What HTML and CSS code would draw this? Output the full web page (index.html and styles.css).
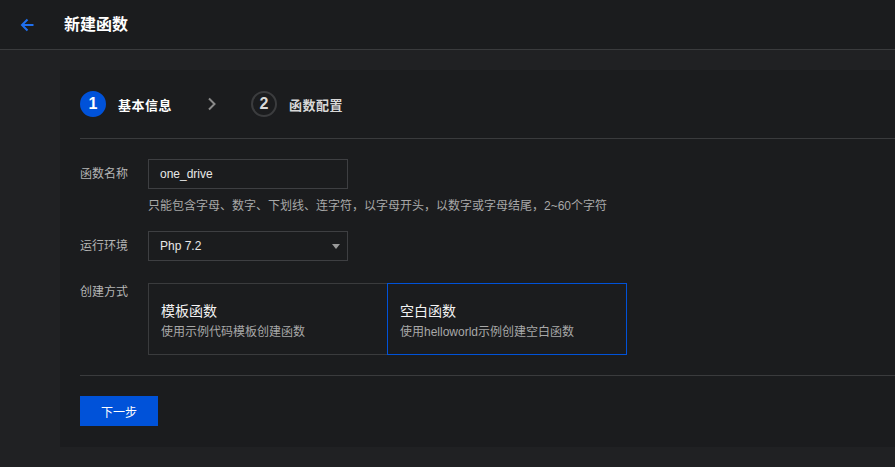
FILE: index.html
```html
<!DOCTYPE html>
<html lang="zh-CN">
<head>
<meta charset="utf-8">
<title>新建函数</title>
<link rel="stylesheet" href="styles.css">
</head>
<body>
<header class="topbar">
  <a class="back" href="#" aria-label="返回">
    <svg width="16" height="16" viewBox="0 0 16 16"><path d="M14.5 8H3M8.5 2.5L3 8l5.5 5.5" fill="none" stroke="#1f6fef" stroke-width="2"/></svg>
  </a>
  <h1 class="title">新建函数</h1>
</header>
<main class="content">
  <section class="panel">
    <div class="steps">
      <div class="step active"><span class="num">1</span><span class="label">基本信息</span></div>
      <svg class="chev" width="10" height="14" viewBox="0 0 10 14"><path d="M2 1.5L7.5 7 2 12.5" fill="none" stroke="#8a8a8a" stroke-width="2"/></svg>
      <div class="step"><span class="num">2</span><span class="label">函数配置</span></div>
    </div>
    <div class="form">
      <div class="row">
        <label class="lbl">函数名称</label>
        <div class="ctrl">
          <div class="input">one_drive</div>
          <p class="help">只能包含字母、数字、下划线、连字符，以字母开头，以数字或字母结尾，2~60个字符</p>
        </div>
      </div>
      <div class="row">
        <label class="lbl">运行环境</label>
        <div class="ctrl">
          <div class="input select">Php 7.2<span class="caret"></span></div>
        </div>
      </div>
      <div class="row top">
        <label class="lbl lbl-top">创建方式</label>
        <div class="ctrl cards">
          <div class="card">
            <div class="card-title">模板函数</div>
            <div class="card-desc">使用示例代码模板创建函数</div>
          </div>
          <div class="card selected">
            <div class="card-title">空白函数</div>
            <div class="card-desc">使用helloworld示例创建空白函数</div>
          </div>
        </div>
      </div>
    </div>
    <div class="footer">
      <button class="btn">下一步</button>
    </div>
  </section>
</main>
</body>
</html>
```
FILE: styles.css
```css
* { box-sizing: border-box; }
html, body { margin: 0; padding: 0; }
body {
  background: #202123;
  font-family: "Liberation Sans", "Noto Sans CJK SC", sans-serif;
  color: #e6e6e6;
  font-size: 12px;
  height: 467px;
  overflow: hidden;
}
.topbar {
  height: 50px;
  background: #1b1c1e;
  border-bottom: 1px solid #3a3b3d;
  display: flex;
  align-items: center;
  padding-left: 19px;
}
.back { display: flex; width: 16px; height: 16px; margin-right: 29px; }
.title {
  margin: 0;
  font-size: 16px;
  font-weight: bold;
  color: #ffffff;
  line-height: 20px;
}
.content { padding: 20px 0 0 60px; }
.panel {
  background: #1b1c1e;
  padding: 0 0 20px 20px;
  height: 377px;
}
.steps {
  display: flex;
  align-items: center;
  height: 69px;
  border-bottom: 1px solid #3a3b3d;
}
.step { display: flex; align-items: center; }
.num {
  width: 26px; height: 26px;
  border-radius: 50%;
  border: 2px solid #3b3c3e;
  display: flex; align-items: center; justify-content: center;
  font-size: 16px; font-weight: bold; color: #d8d8d8;
}
.step.active .num { background: #0052d9; border-color: #0052d9; color: #fff; }
.label {
  margin-left: 12px;
  font-size: 13px;
  font-weight: bold;
  color: #d8d8d8;
  letter-spacing: 0.5px;
}
.step.active .label { color: #fff; }
.chev { margin: 0 34px 0 35px; }
.form { padding-top: 20px; }
.row { display: flex; align-items: flex-start; margin-bottom: 18px; }
.lbl {
  width: 68px;
  line-height: 30px;
  font-size: 12px;
  color: #b5b5b5;
}
.lbl-top { line-height: 18px; }
.input {
  width: 200px; height: 30px;
  border: 1px solid #3e3f42;
  padding-left: 11px;
  line-height: 28px;
  font-size: 12px;
  color: #e8e8e8;
}
.select { display: flex; align-items: center; justify-content: space-between; padding-right: 7px; }
.caret {
  width: 0; height: 0;
  border-left: 4px solid transparent;
  border-right: 4px solid transparent;
  border-top: 5px solid #9a9a9a;
}
.help {
  margin: 10px 0 0 0;
  line-height: 14px;
  font-size: 12px;
  color: #a8a8a8;
}
.row.top { margin-top: 22px; margin-bottom: 0; }
.cards { display: flex; }
.card {
  width: 240px;
  height: 72px;
  border: 1px solid #3a3b3d;
  padding: 17px 12px 0 12px;
}
.card.selected { border-color: #0052d9; margin-left: -1px; position: relative; z-index: 1; }
.card-title { font-size: 14px; color: #f2f2f2; line-height: 20px; }
.card-desc { font-size: 12px; color: #a8a8a8; line-height: 20px; margin-top: 1px; }
.footer {
  margin-top: 20px;
  border-top: 1px solid #3a3b3d;
  padding-top: 20px;
}
.btn {
  width: 78px; height: 30px;
  background: #0052d9;
  border: none;
  color: #fff;
  font-family: inherit;
  font-size: 12px;
  padding: 0;
}
```
